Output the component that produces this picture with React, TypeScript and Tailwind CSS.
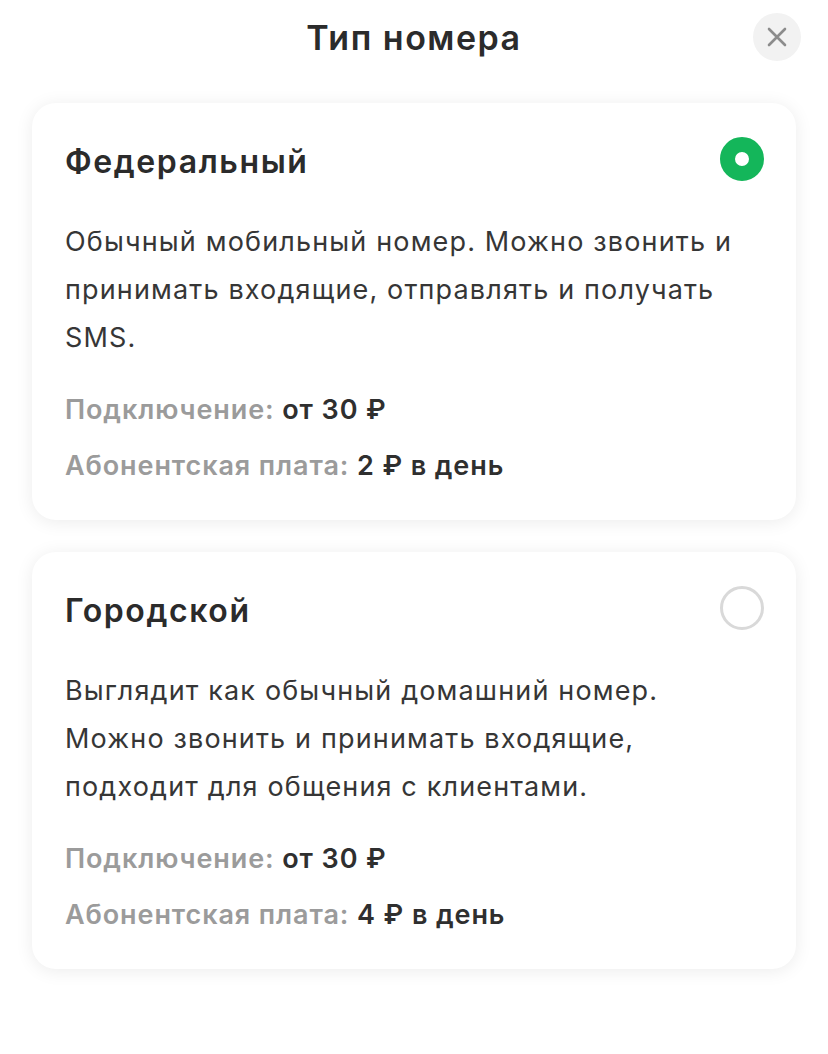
const font = { fontFamily: 'Inter, "Noto Sans", sans-serif' };

type Option = {
  title: string;
  text: string[];
  connect: string;
  fee: string;
  selected: boolean;
};

const options: Option[] = [
  {
    title: 'Федеральный',
    text: [
      'Обычный мобильный номер. Можно звонить и',
      'принимать входящие, отправлять и получать',
      'SMS.',
    ],
    connect: 'от 30 ₽',
    fee: '2 ₽ в день',
    selected: true,
  },
  {
    title: 'Городской',
    text: [
      'Выглядит как обычный домашний номер.',
      'Можно звонить и принимать входящие,',
      'подходит для общения с клиентами.',
    ],
    connect: 'от 30 ₽',
    fee: '4 ₽ в день',
    selected: false,
  },
];

function Radio({ on }: { on: boolean }) {
  if (on) {
    return <div className="w-[44px] h-[44px] rounded-full border-[15px] border-[#14b65a] bg-white" />;
  }
  return <div className="w-[44px] h-[44px] rounded-full border-[3px] border-[#d9d9d9] bg-white" />;
}

function Card({ o }: { o: Option }) {
  return (
    <div className="bg-white rounded-[24px] shadow-[0_2px_18px_rgba(0,0,0,0.08)] pt-[35px] pb-[26px] pl-[33px] pr-[32px]">
      <div className="flex items-center justify-between">
        <h2 className="text-[32px] leading-[48px] font-semibold tracking-[1.6px] text-[#2b2b2b]">{o.title}</h2>
        <div className="-mt-[6px]">
          <Radio on={o.selected} />
        </div>
      </div>
      <div className="mt-[32px] text-[27px] leading-[48px] tracking-[1.15px] text-[#363636]">
        {o.text.map((t) => (
          <p key={t}>{t}</p>
        ))}
      </div>
      <div className="mt-[20px] text-[27px] leading-[56px] font-semibold tracking-[0.9px]">
        <p>
          <span className="text-[#9b9b9b]">Подключение: </span>
          <span className="text-[#2f2f2f]">{o.connect}</span>
        </p>
        <p>
          <span className="text-[#9b9b9b]">Абонентская плата: </span>
          <span className="text-[#2f2f2f]">{o.fee}</span>
        </p>
      </div>
    </div>
  );
}

export default function App() {
  return (
    <div className="w-[828px] h-[1054px] bg-white" style={font}>
      <div className="relative h-[103px]">
        <h1 className="pt-[14px] text-center text-[34px] leading-[48px] font-semibold tracking-[1.5px] text-[#2b2b2b]">Тип номера</h1>
        <button className="absolute top-[13px] right-[27px] w-[48px] h-[48px] rounded-full bg-[#f2f2f2] flex items-center justify-center">
          <svg width="22" height="22" viewBox="0 0 22 22" fill="none" stroke="#8c8c8c" strokeWidth="2.6" strokeLinecap="round">
            <path d="M3 3L19 19M19 3L3 19" />
          </svg>
        </button>
      </div>
      <div className="px-[32px] flex flex-col gap-[32px]">
        {options.map((o) => (
          <Card key={o.title} o={o} />
        ))}
      </div>
    </div>
  );
}
